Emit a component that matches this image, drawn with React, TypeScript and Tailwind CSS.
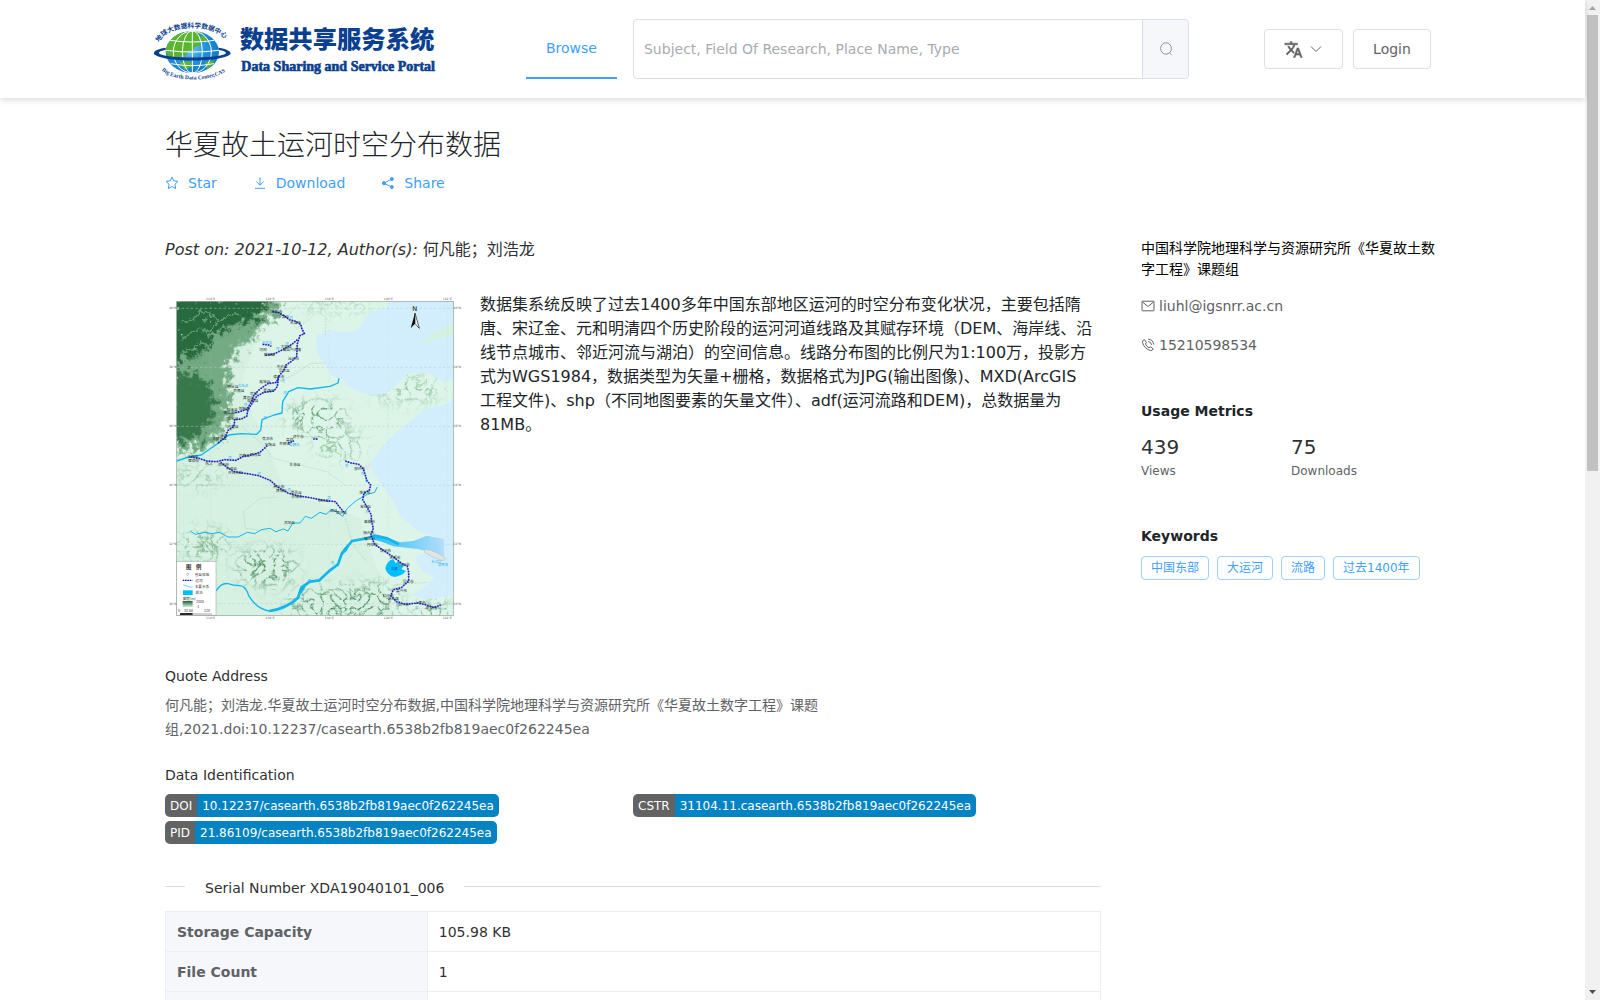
import type { ReactNode } from "react";

const NAVY = "#0b3f8f";

const Icon = ({ size = 14, children }: { size?: number; children: ReactNode }) => (
  <svg
    width={size}
    height={size}
    viewBox="0 0 14 14"
    fill="none"
    stroke="currentColor"
    strokeWidth="1"
    aria-hidden="true"
    className="shrink-0"
  >
    {children}
  </svg>
);

const TranslateIcon = () => (
  <svg width="19" height="19" viewBox="0 0 24 24" fill="currentColor" stroke="currentColor" strokeWidth="0.7" aria-hidden="true">
    <path d="M12.87 15.07l-2.54-2.51.03-.03A17.52 17.52 0 0014.07 6H17V4h-7V2H8v2H1v2h11.17C11.5 7.92 10.44 9.75 9 11.35 8.07 10.32 7.3 9.19 6.69 8h-2c.73 1.63 1.73 3.17 2.98 4.56l-5.09 5.02L4 19l5-5 3.11 3.11.76-2.04zM18.5 10h-2L12 22h2l1.12-3h4.75L21 22h2l-4.5-12zm-2.62 7l1.62-4.33L19.12 17h-3.24z" />
  </svg>
);

const Logo = () => (
  <svg viewBox="30 48 870 195" className="block w-[290px] h-[65px] overflow-visible" role="img" aria-label="Data Sharing and Service Portal">
    <defs>
      <radialGradient id="ocean" cx="0.4" cy="0.4" r="0.65">
        <stop offset="0" stopColor="#8fd3f5" />
        <stop offset="0.5" stopColor="#2497dc" />
        <stop offset="1" stopColor="#1176c4" />
      </radialGradient>
      <clipPath id="globe">
        <ellipse cx="160" cy="153" rx="80" ry="63" />
      </clipPath>
      <path id="arcTop" d="M 60 124 C 88 66 234 66 266 126" />
      <path id="arcBottom" d="M 68 208 C 104 244 218 246 268 206" />
    </defs>
    <ellipse cx="160" cy="153" rx="80" ry="63" fill="url(#ocean)" />
    <g clipPath="url(#globe)">
      <path
        d="M78 150 L86 118 L110 96 L144 92 L186 94 L178 104 L192 112 L180 122 L184 134 L168 138 L160 152 L150 148 L138 168 L130 158 L120 176 L104 166 L94 174 Z"
        fill="#5cb531"
      />
      <path d="M188 100 L206 112 L200 122 L186 118 Z M120 184 L152 180 L162 196 L136 206 Z M198 184 L226 178 L216 196 L204 204 Z" fill="#5cb531" />
      <g stroke="#fff" strokeWidth="3" fill="none">
        <path d="M160 90 V216 M93 118 Q160 128 227 118 M81 148 Q160 158 240 148 M95 188 Q160 200 225 188" />
        <ellipse cx="160" cy="153" rx="30" ry="63" />
        <ellipse cx="160" cy="153" rx="57" ry="63" />
      </g>
    </g>
    <path
      d="M80 140 C50 144 36 155 50 163 C84 184 234 184 270 163 C284 154 266 144 238 140 L240 147 C258 150 266 155 257 160 C224 173 96 173 64 160 C54 154 64 149 80 147 Z"
      fill={NAVY}
    />
    <g fill={NAVY} fontWeight="700">
      <text fontSize="20" fontFamily="'Noto Sans CJK SC', sans-serif">
        <textPath href="#arcTop">地球大数据科学数据中心</textPath>
      </text>
      <text fontSize="17" fontFamily="'Liberation Serif', serif">
        <textPath href="#arcBottom">Big Earth Data Center,CAS</textPath>
      </text>
      <text x="302" y="140" fontSize="73" fontWeight="900" fontFamily="'Noto Sans CJK SC', sans-serif">
        数据共享服务系统
      </text>
      <text x="307" y="211" fontSize="42" stroke={NAVY} strokeWidth="2" fontFamily="'Liberation Serif', serif">
        Data Sharing and Service Portal
      </text>
    </g>
  </svg>
);

const CANALS = [
  "M338 80 L356 83 L372 92 L388 104 L404 108 L422 118 L426 132 L433 146 L420 152 L412 176 L410 214 L396 228 L378 240 L372 256 L356 274 L350 292 L324 296 L300 312 L282 330 L276 346 L262 372 L240 380 L222 384",
  "M412 164 L396 178 L372 192 L344 206 L316 211",
  "M356 274 L352 304 L342 318 L312 322 L290 334 L276 356 L264 374 L260 394 L244 402 L224 404 L222 424 L204 436 L196 456 L172 476",
  "M92 516 L116 520 L140 528 L170 530 L194 524 L228 526 L250 514 L284 508 L302 500 L322 482",
  "M182 532 L200 546 L222 560 L262 566 L296 572 L330 586 L356 608 L384 624 L410 632 L450 638 L490 646 L526 650 L540 668 L554 684",
  "M556 528 L574 534 L596 538 L610 552 L616 570 L620 586 L632 600 L628 616 L612 624 L608 644 L620 664 L634 690 L634 706 L640 730 L632 750 L644 778 L670 796 L700 816 L726 836 L742 844 L746 862 L746 888 L724 908 L700 914 L692 932 L710 950 L736 958 L774 954 L800 960 L822 968 L842 960",
  "M308 178 L326 180 L334 184 M384 474 L402 468 M460 462 L474 462",
];

const TOWNS: [number, number, string][] = [
  [334, 84, "涿州市"], [354, 100, "永清县"], [390, 116, "天津市"], [362, 188, "大城县"], [368, 198, "青县兴济镇"],
  [298, 198, "河间"], [312, 213, "献县县"], [384, 224, "沧州市"], [350, 250, "东光县"], [356, 262, "吴桥县"],
  [340, 278, "德州市"], [298, 295, "故城县"], [202, 308, "邢台县"], [220, 320, "巨鹿县"], [248, 341, "清河县"],
  [262, 351, "临西县"], [270, 330, "武城"], [310, 322, "夏津县"], [236, 374, "馆陶县"], [190, 388, "魏县县"],
  [200, 378, "临漳县"], [202, 405, "大名县"], [202, 430, "内黄县"], [156, 464, "卫辉市县"], [180, 456, "滑县"],
  [82, 520, "洛阳市"], [84, 530, "偃师市"], [136, 540, "巩义"], [174, 544, "郑州市"], [198, 556, "中牟县"],
  [204, 566, "开封市县"], [306, 464, "菏泽市"], [314, 482, "定陶县"], [236, 515, "兰考县"], [270, 512, "民权县"],
  [358, 481, "巨野县"], [378, 468, "嘉祥"], [398, 458, "济宁市"], [388, 542, "丰沛县"], [340, 610, "商丘市"],
  [348, 620, "虞城县"], [392, 628, "夏邑县"], [394, 638, "永城市"], [474, 650, "宿州县"], [510, 680, "泗县"],
  [528, 687, "泗洪县"], [372, 718, "涡阳县"], [582, 554, "邳州市"], [598, 626, "淮安市"], [600, 670, "宝应县"],
  [612, 714, "高邮市"], [610, 746, "扬州市"], [612, 766, "镇江市"], [620, 784, "丹阳市"], [660, 802, "常州市"],
  [688, 822, "无锡市"], [716, 844, "苏州市"], [728, 894, "吴江市"], [708, 922, "嘉兴市"], [668, 936, "杭州市"],
  [684, 946, "萧山区"], [714, 962, "绍兴市"], [764, 958, "上虞市"], [798, 972, "余姚市"],
];

const Terrain = () => (
  <>
    <g filter="url(#ridges)">
      <path d="M30 30 H370 L354 90 L310 116 L284 158 L242 180 L226 214 L198 232 L212 300 L208 400 L156 480 L30 510 Z" fill="#74ab84" />
      <path d="M30 30 H346 L290 104 L220 124 L160 150 L140 194 L114 218 L30 224 Z" fill="#276b3e" />
      <path d="M30 250 L100 260 L160 310 L166 400 L116 456 L30 480 Z" fill="#38794c" />
    </g>
    <g fill="none" stroke="#6fa87f" strokeWidth="8" strokeOpacity="0.75" filter="url(#bend)">
      <path d="M60 120 L120 92 L190 98 L250 76 M60 160 L120 140 L180 110 M60 206 L102 186 L150 170 L230 130 M60 246 L120 230 L160 250" />
    </g>
    <g filter="url(#speckle)">
      <ellipse cx="470" cy="396" rx="90" ry="46" fill="#4b8d5d" />
      <ellipse cx="540" cy="480" rx="80" ry="40" fill="#7bb38a" />
      <ellipse cx="740" cy="314" rx="110" ry="34" fill="#7bb38a" />
      <ellipse cx="320" cy="846" rx="90" ry="54" fill="#3f8455" />
      <ellipse cx="130" cy="780" rx="80" ry="50" fill="#7bb38a" />
      <ellipse cx="540" cy="960" rx="160" ry="50" fill="#3f8455" />
      <ellipse cx="640" cy="950" rx="80" ry="50" fill="#3f8455" />
      <ellipse cx="820" cy="986" rx="60" ry="30" fill="#3f8455" />
      <ellipse cx="110" cy="580" rx="80" ry="26" fill="#7bb38a" />
      <ellipse cx="530" cy="58" rx="130" ry="14" fill="#7bb38a" />
      <ellipse cx="850" cy="130" rx="40" ry="30" fill="#7bb38a" />
    </g>
  </>
);

const RegionMap = () => (
  <svg viewBox="15 0 900 1035" className="block w-[300px] h-[345px] shrink-0" role="img" aria-label="华夏故土运河时空分布数据">
    <defs>
      <clipPath id="frame">
        <rect x="50" y="49" width="830" height="943" />
      </clipPath>
      <filter id="ridges" x="-10%" y="-10%" width="120%" height="120%">
        <feGaussianBlur in="SourceGraphic" stdDeviation="6" result="soft" />
        <feTurbulence type="fractalNoise" baseFrequency="0.05" numOctaves="6" seed="4" result="n" />
        <feDisplacementMap in="soft" in2="n" xChannelSelector="R" yChannelSelector="G" scale="100" />
      </filter>
      <filter id="bend" x="-10%" y="-10%" width="120%" height="120%">
        <feGaussianBlur in="SourceGraphic" stdDeviation="2" result="soft" />
        <feTurbulence type="fractalNoise" baseFrequency="0.03" numOctaves="5" seed="7" result="n" />
        <feDisplacementMap in="soft" in2="n" xChannelSelector="R" yChannelSelector="G" scale="70" />
      </filter>
      <filter id="speckle" x="-30%" y="-30%" width="160%" height="160%">
        <feGaussianBlur in="SourceGraphic" stdDeviation="24" result="b" />
        <feTurbulence type="turbulence" baseFrequency="0.035" numOctaves="6" seed="9" />
        <feColorMatrix type="matrix" values="0 0 0 0 0 0 0 0 0 0 0 0 0 0 0 0 -4 0 0 1.25" result="mask" />
        <feComposite in="b" in2="mask" operator="in" />
      </filter>
      <linearGradient id="estuary" x1="0" x2="1" y1="0" y2="0">
        <stop offset="0" stopColor="#29bdf7" />
        <stop offset="1" stopColor="#b3defa" />
      </linearGradient>
      <linearGradient id="elevation" x1="0" x2="0" y1="0" y2="1">
        <stop offset="0" stopColor="#1f6336" />
        <stop offset="1" stopColor="#cdeedb" />
      </linearGradient>
    </defs>
    <g clipPath="url(#frame)">
      <rect x="50" y="49" width="830" height="943" fill="#d6f1e2" />
      <path d="M338 49 L880 49 V992 H700 L600 700 L380 620 L240 300 Z" fill="#dcf5e8" />
      <Terrain />
      <g fill="#d2eefc">
        <path d="M690 49 H880 V286 L846 290 L820 270 L780 262 L746 264 L724 284 L704 306 L672 326 L636 330 L600 322 L562 302 L548 282 L512 272 L502 246 L476 212 L468 180 L470 152 L506 134 L550 142 L588 138 L606 120 L622 92 L648 76 L680 70 Z" />
        <path d="M880 342 L848 362 L800 370 L762 398 L730 424 L706 444 L682 468 L652 500 L634 530 L638 560 L660 592 L682 622 L706 660 L718 690 L754 722 L784 742 L820 752 L836 810 L782 806 L764 822 L790 860 L824 880 L800 900 L758 930 L796 944 L880 930 Z" />
      </g>
      <path d="M780 170 L806 162 L816 144 L846 132 L880 112 V150 L852 156 L826 162 L800 176 Z" fill="#d5f0df" />
      <g fill="none" stroke="#b9cdbf" strokeWidth="2" strokeDasharray="6 3">
        <path d="M400 70 L382 100 L410 130 L446 104 L470 80 L498 96 L496 150 M496 234 L450 236 L400 270 L330 300 L292 340" />
        <path d="M250 430 L300 470 L340 520 L420 540 L500 560 L556 600 M250 680 L300 640 L350 636 M250 680 L256 730 L330 740 M556 700 L580 780 L620 830 M700 900 L800 892" />
      </g>
      <g stroke="#b9c6d0" strokeWidth="1.5" strokeDasharray="8 6">
        <path d="M50 70 H880 M50 247 H880 M50 424 H880 M50 601 H880 M50 778 H880 M50 956 H880" />
        <path d="M152 49 V992 M330 49 V992 M508 49 V992 M685 49 V992 M862 49 V992" strokeOpacity="0.4" />
      </g>
      <path d="M640 748 Q690 760 720 772 L760 768 L800 752 L852 762 V826 Q820 800 772 792 L700 784 Q660 766 640 764 Z" fill="url(#estuary)" />
      <g fill="none" stroke="#12b6ee" strokeWidth="4" strokeLinejoin="round">
        <path d="M50 528 L86 516 L124 510 L158 486 L178 472 L206 450 L244 446 L290 448 L302 436 L306 404 L342 390 L366 384 L368 350 L386 320 L414 308 L450 312 L510 304 L534 294 L537 280" />
        <path d="M90 738 L106 748 L134 742 L156 746 L178 742 L204 756 L234 756 L262 742 L284 746 L304 734 L330 730 L348 740 L370 732 L384 738 L398 714 L420 714 L436 694 L454 700 L480 682 L498 688 L514 674 L532 682 L548 694 L562 670 L590 646 L622 628 L644 622 L652 606" strokeWidth="3" />
        <path d="M168 918 Q184 892 204 896 Q220 902 240 902 Q258 904 266 932 Q290 972 328 978 Q372 974 408 944" />
        <path d="M328 978 Q380 970 414 938 L424 908 L450 890 L478 886 L510 856 L534 838 L546 804 L576 768 L620 760 L644 752 L682 760 L716 778" strokeWidth="8" />
      </g>
      <path d="M412 940 L420 908 L444 890 L432 914 Z M540 816 L552 790 L578 764 L560 798 Z" fill="#12b6ee" />
      <path d="M700 822 Q680 828 676 850 Q682 874 706 876 L728 868 L738 858 L724 852 L734 840 L716 842 L722 828 L706 834 Z" fill="#00bfff" />
      <path d="M792 794 Q810 790 850 814 Q864 826 846 826 Q812 816 794 802 Z" fill="#dfe7e5" stroke="#b7c4c0" strokeWidth="2" />
      <path d="M612 544 L630 532 L638 542 L622 556 Z" fill="#dfe7e5" />
      <g fill="none" stroke="#5a56c4" strokeWidth="2">
        {CANALS.map((d) => (
          <path key={d} d={d} />
        ))}
      </g>
      <g fill="none" stroke="#1a17cc" strokeWidth="5" strokeDasharray="4 4">
        {CANALS.map((d) => (
          <path key={d} d={d} />
        ))}
      </g>
      <g fill="#23332b" fontSize="11" fontFamily="'Noto Sans CJK SC', sans-serif">
        {TOWNS.map(([x, y, name]) => (
          <text key={name} x={x} y={y}>
            {name}
          </text>
        ))}
      </g>
      <g fill="#21aef0" fontSize="10" fontFamily="'Noto Sans CJK SC', sans-serif">
        <text x="306" y="178">白洋淀</text>
        <text x="234" y="307">大陆泽</text>
        <text x="388" y="484">巨野泽</text>
        <text x="814" y="834">长江口</text>
        <text x="834" y="844">崇明岛</text>
        {[[348, 196], [388, 102], [376, 180], [364, 290], [370, 326], [310, 401], [252, 362], [204, 523], [292, 570], [382, 618], [502, 642], [554, 546], [602, 570], [614, 592], [616, 684], [512, 838], [442, 890], [708, 956], [764, 972]].map(([x, y]) => (
          <text key={x} x={x} y={y}>
            河
          </text>
        ))}
      </g>
      <text x="692" y="856" fontSize="10" fill="#16469c" fontFamily="'Noto Sans CJK SC', sans-serif">太湖</text>
      <text x="757" y="78" fontSize="20" fontFamily="'DejaVu Sans', sans-serif" fill="#111">N</text>
      <path d="M765 84 L752 130 L765 116 Z" fill="#111" />
      <path d="M765 84 L778 130 L765 116 Z" fill="#fff" stroke="#111" strokeWidth="2" />
      <rect x="50" y="829" width="118" height="163" fill="#fff" stroke="#999" strokeWidth="1.5" />
    </g>
    <g fontFamily="'Noto Sans CJK SC', sans-serif" fontSize="11" fill="#333">
      <text x="78" y="851" fontSize="16" fontWeight="700">图</text>
      <text x="108" y="851" fontSize="16" fontWeight="700">例</text>
      <circle cx="83" cy="868" r="3" fill="none" stroke="#555" />
      <text x="104" y="872">省县驻地</text>
      <path d="M68 886 H97" stroke="#1512d4" strokeWidth="4" strokeDasharray="5 2" />
      <text x="106" y="890">运河</text>
      <path d="M70 900 L80 902 L88 906 L98 906" stroke="#12b6ee" strokeWidth="2" fill="none" />
      <text x="104" y="908">主要水系</text>
      <rect x="69" y="916" width="29" height="14" fill="#00bfff" />
      <text x="106" y="928">湖泊</text>
      <text x="68" y="944">高程(m)</text>
      <rect x="68" y="948" width="30" height="18" fill="url(#elevation)" />
      <text x="108" y="954">2000</text>
      <text x="108" y="970">-1</text>
      <text x="54" y="981">0</text>
      <text x="72" y="981">30 60</text>
      <text x="132" y="981">120</text>
      <path d="M60 987 H98" stroke="#000" strokeWidth="5" />
      <path d="M98 987 H156" stroke="#777" strokeWidth="2" />
    </g>
    <rect x="50" y="49" width="830" height="943" fill="none" stroke="#8fa096" strokeWidth="2" />
    <g fontFamily="'DejaVu Sans', sans-serif" fontSize="9" fill="#555" textAnchor="middle">
      {[152, 330, 508, 685, 862].map((x, i) => (
        <g key={x}>
          <text x={x} y="46">{114 + i * 2}°E</text>
          <text x={x} y="1002">{114 + i * 2}°E</text>
        </g>
      ))}
      {[70, 247, 424, 601, 778, 956].map((y, i) => (
        <g key={y}>
          <text x="38" y={y + 3}>{40 - i * 2}°N</text>
          <text x="892" y={y + 3}>{40 - i * 2}°N</text>
        </g>
      ))}
    </g>
  </svg>
);

const Header = () => (
  <header className="relative bg-white shadow-[0_2px_6px_rgba(0,0,0,0.15)]">
    <div className="mx-auto flex h-[98px] max-w-[1287px] items-center pr-[5px]">
      <a href="#home" className="shrink-0">
        <Logo />
      </a>
      <nav className="ml-[87px] shrink-0">
        <a href="#browse" className="block h-[60px] border-b-2 border-[#409eff] px-5 leading-[58px] text-[#409eff]">
          Browse
        </a>
      </nav>
      <form className="ml-4 flex h-[60px] min-w-0 flex-1 rounded border border-[#dcdfe6]">
        <input
          type="text"
          aria-label="Search"
          placeholder="Subject, Field Of Research, Place Name, Type"
          className="min-w-0 flex-1 rounded-l px-[10px] outline-none placeholder:text-[#a8abb2]"
        />
        <button
          type="button"
          aria-label="Search"
          className="flex w-[46px] items-center justify-center rounded-r border-l border-[#dcdfe6] bg-[#f5f7fa] text-[#909399]"
        >
          <Icon>
            <ellipse cx="7" cy="6.5" rx="5.4" ry="5.7" />
            <path d="M10.6 10.9 L12.6 12.8" />
          </Icon>
        </button>
      </form>
      <div className="ml-[75px] flex shrink-0 gap-[10px] text-[#606266]">
        <button
          type="button"
          aria-label="Language"
          className="flex h-10 w-[79px] items-center justify-center gap-[6px] rounded border border-[#dcdfe6]"
        >
          <TranslateIcon />
          <Icon>
            <path d="M2 4.5 L7 9.5 L12 4.5" />
          </Icon>
        </button>
        <button type="button" className="h-10 w-[78px] rounded border border-[#dcdfe6]">
          Login
        </button>
      </div>
    </div>
  </header>
);

const Badge = ({ label, value }: { label: string; value: string }) => (
  <a href={`#${label}`} className="flex h-[23px] w-fit overflow-hidden rounded-[5px] text-xs leading-6 text-white">
    <span className="bg-[#636363] px-[5px]">{label}</span>
    <span className="bg-[#0483c3] px-[5px]">{value}</span>
  </a>
);

const rows = [
  ["Storage Capacity", "105.98 KB"],
  ["File Count", "1"],
  ["", ""],
];

const keywords = ["中国东部", "大运河", "流路", "过去1400年"];

const Sidebar = () => (
  <aside className="w-[295px] shrink-0 pt-[38px] text-[#606266]">
    <p className="leading-[21px] text-black">中国科学院地理科学与资源研究所《华夏故土数字工程》课题组</p>
    <a href="mailto:liuhl@igsnrr.ac.cn" className="mt-4 flex h-5 items-center gap-1">
      <Icon>
        <rect x="1" y="2.2" width="12" height="9.6" rx="0.5" />
        <path d="M1.5 3 L7 7.5 L12.5 3" />
      </Icon>
      liuhl@igsnrr.ac.cn
    </a>
    <p className="mt-[19px] flex h-5 items-center gap-1">
      <Icon>
        <path d="M3.4 1.6 L5.4 4.6 L4.4 6 Q5.6 8.4 8 9.8 L9.4 8.8 L12.2 10.8 Q11.4 13 9.6 12.6 Q3.2 10.8 1.4 4.4 Q1.2 2.4 3.4 1.6 Z" />
        <path d="M7.2 1.2 Q12 1.4 12.8 6.6 M7.2 3.6 Q10.2 4 10.6 6.8" />
      </Icon>
      15210598534
    </p>
    <h2 className="mt-[46px] leading-5 font-bold text-[#212529]">Usage Metrics</h2>
    <dl className="mt-3 flex">
      <div className="flex w-[150px] flex-col-reverse">
        <dt className="text-xs leading-5">Views</dt>
        <dd className="text-xl leading-7 text-[#303133]">439</dd>
      </div>
      <div className="flex flex-col-reverse">
        <dt className="text-xs leading-5">Downloads</dt>
        <dd className="text-xl leading-7 text-[#303133]">75</dd>
      </div>
    </dl>
    <h2 className="mt-[45px] leading-5 font-bold text-[#212529]">Keywords</h2>
    <div className="mt-[10px] flex gap-2">
      {keywords.map((word) => (
        <a
          key={word}
          href={`#${word}`}
          className="h-6 shrink-0 rounded border border-[#a0cfff] px-[9px] text-xs leading-[22px] text-[#409eff]"
        >
          {word}
        </a>
      ))}
    </div>
  </aside>
);

const Article = () => (
  <article className="min-w-0 flex-1 pt-[38px]">
    <p className="text-base leading-6 text-[#303133]">
      <em>Post on: 2021-10-12, Author(s):</em> 何凡能；刘浩龙
    </p>
    <div className="mt-[23px] flex gap-[15px]">
      <RegionMap />
      <p className="flex-1 pt-2 pr-[5px] text-base leading-6">
        数据集系统反映了过去1400多年中国东部地区运河的时空分布变化状况，主要包括隋唐、宋辽金、元和明清四个历史阶段的运河河道线路及其赋存环境（DEM、海岸线、沿线节点城市、邻近河流与湖泊）的空间信息。线路分布图的比例尺为1:100万，投影方式为WGS1984，数据类型为矢量+栅格，数据格式为JPG(输出图像)、MXD(ArcGIS
        <br />
        工程文件)、shp（不同地图要素的矢量文件）、adf(运河流路和DEM)，总数据量为
        <br />
        81MB。
      </p>
    </div>

    <h2 className="mt-9 leading-5 text-[#303133]">Quote Address</h2>
    <p className="mt-[7px] max-w-[665px] leading-6 text-[#606266]">
      何凡能；刘浩龙.华夏故土运河时空分布数据,中国科学院地理科学与资源研究所《华夏故土数字工程》课题组,2021.doi:10.12237/casearth.6538b2fb819aec0f262245ea
    </p>

    <h2 className="mt-6 leading-5 text-[#303133]">Data Identification</h2>
    <div className="mt-[9px] grid grid-cols-2 gap-y-1">
      <Badge label="DOI" value="10.12237/casearth.6538b2fb819aec0f262245ea" />
      <Badge label="CSTR" value="31104.11.casearth.6538b2fb819aec0f262245ea" />
      <Badge label="PID" value="21.86109/casearth.6538b2fb819aec0f262245ea" />
    </div>

    <div className="mt-8 flex h-6 gap-5 text-[#303133]">
      <span className="mt-[10px] h-px w-5 bg-[#dcdfe6]" />
      <h2 className="leading-6">Serial Number XDA19040101_006</h2>
      <span className="mt-[10px] h-px flex-1 bg-[#dcdfe6]" />
    </div>
    <table className="mt-[11px] w-full table-fixed border-collapse">
      <tbody>
        {rows.map(([label, value]) => (
          <tr key={label} className="h-10">
            <th className="w-[28%] border border-[#ebeef5] bg-[#f5f7fa] px-[11px] text-left font-bold text-[#606266]">{label}</th>
            <td className="border border-[#ebeef5] px-[11px] text-[#303133]">{value}</td>
          </tr>
        ))}
      </tbody>
    </table>
  </article>
);

const App = () => (
  <div className="flex h-screen overflow-hidden bg-white font-['DejaVu_Sans','Noto_Sans_CJK_SC',sans-serif] text-sm text-[#212529]">
    <div className="min-w-0 flex-1">
      <Header />
      <main className="mx-auto max-w-[1287px] pt-7 pl-4">
        <h1 className="text-[28px] leading-10 font-light">华夏故土运河时空分布数据</h1>
        <div className="mt-[7px] flex gap-9 leading-5 text-[#409eff]">
          <button type="button" className="flex items-center gap-[9px]">
            <Icon>
              <path d="M7 1 L8.8 4.9 L13 5.4 L9.9 8.3 L10.7 12.6 L7 10.5 L3.3 12.6 L4.1 8.3 L1 5.4 L5.2 4.9 Z" />
            </Icon>
            Star
          </button>
          <button type="button" className="flex items-center gap-[9px]">
            <Icon>
              <path d="M7 1.5 V9 M3.3 5.5 L7 9.2 L10.7 5.5 M2 12.3 H12" />
            </Icon>
            Download
          </button>
          <button type="button" className="flex items-center gap-[9px]">
            <Icon>
              <path d="M10.5 3.2 L3 7.2 L10.5 11" />
              <circle cx="3" cy="7.2" r="1.6" fill="currentColor" />
              <circle cx="10.8" cy="3" r="1.5" fill="currentColor" />
              <circle cx="10.8" cy="11" r="1.5" fill="currentColor" />
            </Icon>
            Share
          </button>
        </div>
        <div className="mt-[7px] flex items-start gap-10">
          <Article />
          <Sidebar />
        </div>
      </main>
    </div>
    <div className="flex w-[15px] shrink-0 flex-col bg-[#f1f1f1]" aria-hidden="true">
      <svg width="15" height="15" viewBox="0 0 15 15">
        <path d="M4 10 H11 L7.5 6 Z" fill="#a3a3a3" />
      </svg>
      <div className="flex-1">
        <div className="mx-auto h-[47%] w-[11px] bg-[#c1c1c1]" />
      </div>
      <svg width="15" height="15" viewBox="0 0 15 15">
        <path d="M4 5 H11 L7.5 9 Z" fill="#505050" />
      </svg>
    </div>
  </div>
);

export default App;
